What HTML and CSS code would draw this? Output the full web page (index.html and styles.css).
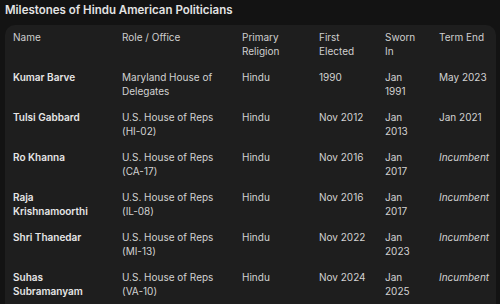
FILE: index.html
```html
<!DOCTYPE html>
<html>
<head>
<meta charset="utf-8">
<link rel="stylesheet" href="styles.css">
</head>
<body>
<h1 class="title">Milestones of Hindu American Politicians</h1>
<div class="card">
<table class="tbl">
<colgroup>
<col class="c1"><col class="c2"><col class="c3"><col class="c4"><col class="c5"><col class="c6">
</colgroup>
<thead>
<tr><th>Name</th><th>Role / Office</th><th>Primary Religion</th><th>First Elected</th><th>Sworn In</th><th>Term End</th></tr>
</thead>
<tbody>
<tr><td class="nm">Kumar Barve</td><td>Maryland House of Delegates</td><td>Hindu</td><td>1990</td><td>Jan 1991</td><td>May 2023</td></tr>
<tr><td class="nm">Tulsi Gabbard</td><td>U.S. House of Reps (HI-02)</td><td>Hindu</td><td>Nov 2012</td><td>Jan 2013</td><td>Jan 2021</td></tr>
<tr><td class="nm">Ro Khanna</td><td>U.S. House of Reps (CA-17)</td><td>Hindu</td><td>Nov 2016</td><td>Jan 2017</td><td class="it">Incumbent</td></tr>
<tr><td class="nm">Raja Krishnamoorthi</td><td>U.S. House of Reps (IL-08)</td><td>Hindu</td><td>Nov 2016</td><td>Jan 2017</td><td class="it">Incumbent</td></tr>
<tr><td class="nm">Shri Thanedar</td><td>U.S. House of Reps (MI-13)</td><td>Hindu</td><td>Nov 2022</td><td>Jan 2023</td><td class="it">Incumbent</td></tr>
<tr><td class="nm">Suhas Subramanyam</td><td>U.S. House of Reps (VA-10)</td><td>Hindu</td><td>Nov 2024</td><td>Jan 2025</td><td class="it">Incumbent</td></tr>
</tbody>
</table>
</div>
</body>
</html>
```
FILE: styles.css
```css
html, body {
  margin: 0;
  padding: 0;
  background: #131313;
  overflow: hidden;
  height: 304px;
}
body {
  font-family: Inter, Roboto, sans-serif;
  color: #d4d4d4;
}
.title {
  margin: 0;
  padding: 1px 5px 0;
  font-size: 11.5px;
  line-height: 18px;
  font-weight: 600;
  color: #e3e3e3;
}
.card {
  margin: 6px 4px 0 5px;
  background: #1e1e1e;
  border-radius: 10px 10px 0 0;
  height: 300px;
}
.tbl {
  width: 100%;
  table-layout: fixed;
  border-collapse: collapse;
  font-size: 10px;
  line-height: 14px;
}
.c1 { width: 109px; }
.c2 { width: 120px; }
.c3 { width: 77px; }
.c4 { width: 66px; }
.c5 { width: 54px; }
.tbl th, .tbl td {
  text-align: left;
  vertical-align: top;
  padding: 5px 8px 7px 8px;
}
.tbl th {
  font-weight: 400;
  color: #cfcfcf;
}
.tbl td {
  color: #d2d2d2;
}
.tbl td.nm {
  font-weight: 600;
  color: #e6e6e6;
}
.tbl td.it {
  font-style: italic;
}
```
